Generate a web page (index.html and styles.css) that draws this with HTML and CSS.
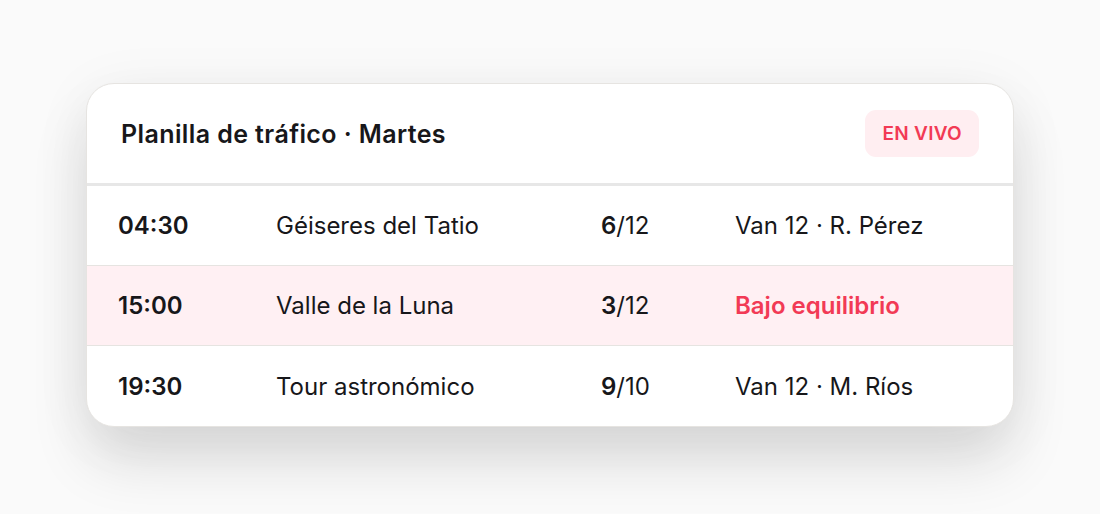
FILE: index.html
```html
<!DOCTYPE html>
<html lang="es">
<head>
  <meta charset="UTF-8" />
  <title>Planilla de tráfico</title>
  <link rel="stylesheet" href="styles.css">
</head>
<body>

  <div class="card">
    <div class="card-head">
      <h1>Planilla de tráfico · Martes</h1>
      <span class="badge">EN VIVO</span>
    </div>

    <div class="row">
      <span class="time">04:30</span>
      <span class="tour">Géiseres del Tatio</span>
      <span class="seats"><b>6</b>/12</span>
      <span class="driver">Van 12 · R. Pérez</span>
    </div>
    <div class="row alert">
      <span class="time">15:00</span>
      <span class="tour">Valle de la Luna</span>
      <span class="seats"><b>3</b>/12</span>
      <span class="driver warn">Bajo equilibrio</span>
    </div>
    <div class="row">
      <span class="time">19:30</span>
      <span class="tour">Tour astronómico</span>
      <span class="seats"><b>9</b>/10</span>
      <span class="driver">Van 12 · M. Ríos</span>
    </div>
  </div>

</body>
</html>
```

FILE: styles.css
```css
* { box-sizing: border-box; }
body {
  margin: 0;
  padding: 83px 0 0 86px;
  background: #fafafa;
  font-family: Inter, 'Noto Sans', sans-serif;
  color: #17171a;
  min-height: 100vh;
}
.card {
  width: 928px;
  background: #fff;
  border: 1px solid #e6e4e1;
  border-radius: 28px;
  overflow: hidden;
  box-shadow: 0 36px 60px -4px rgba(30,30,30,.14), 0 8px 60px rgba(30,30,30,.06);
}
.card-head {
  display: flex;
  align-items: center;
  justify-content: space-between;
  height: 102px;
  padding: 0 34px 0 34px;
  border-bottom: 3px solid #e7e7e7;
}
.card-head h1 {
  margin: 0;
  font-size: 25px;
  font-weight: 600;
  letter-spacing: 0.4px;
}
.badge {
  display: inline-block;
  padding: 13px 17px;
  border-radius: 11px;
  background: #ffeef1;
  color: #f23a55;
  font-size: 19px;
  font-weight: 600;
  line-height: 21px;
  letter-spacing: 0.3px;
}
.row {
  display: grid;
  grid-template-columns: 158px 325px 134px 1fr;
  align-items: center;
  height: 80px;
  padding-left: 31px;
  font-size: 24px;
  border-bottom: 1px solid #e6e4e1;
}
.row:last-child { border-bottom: none; }
.row.alert { background: #fff0f3; }
.time { font-weight: 600; }
.seats b { font-weight: 600; }
.warn { color: #f23a55; font-weight: 600; }
```
